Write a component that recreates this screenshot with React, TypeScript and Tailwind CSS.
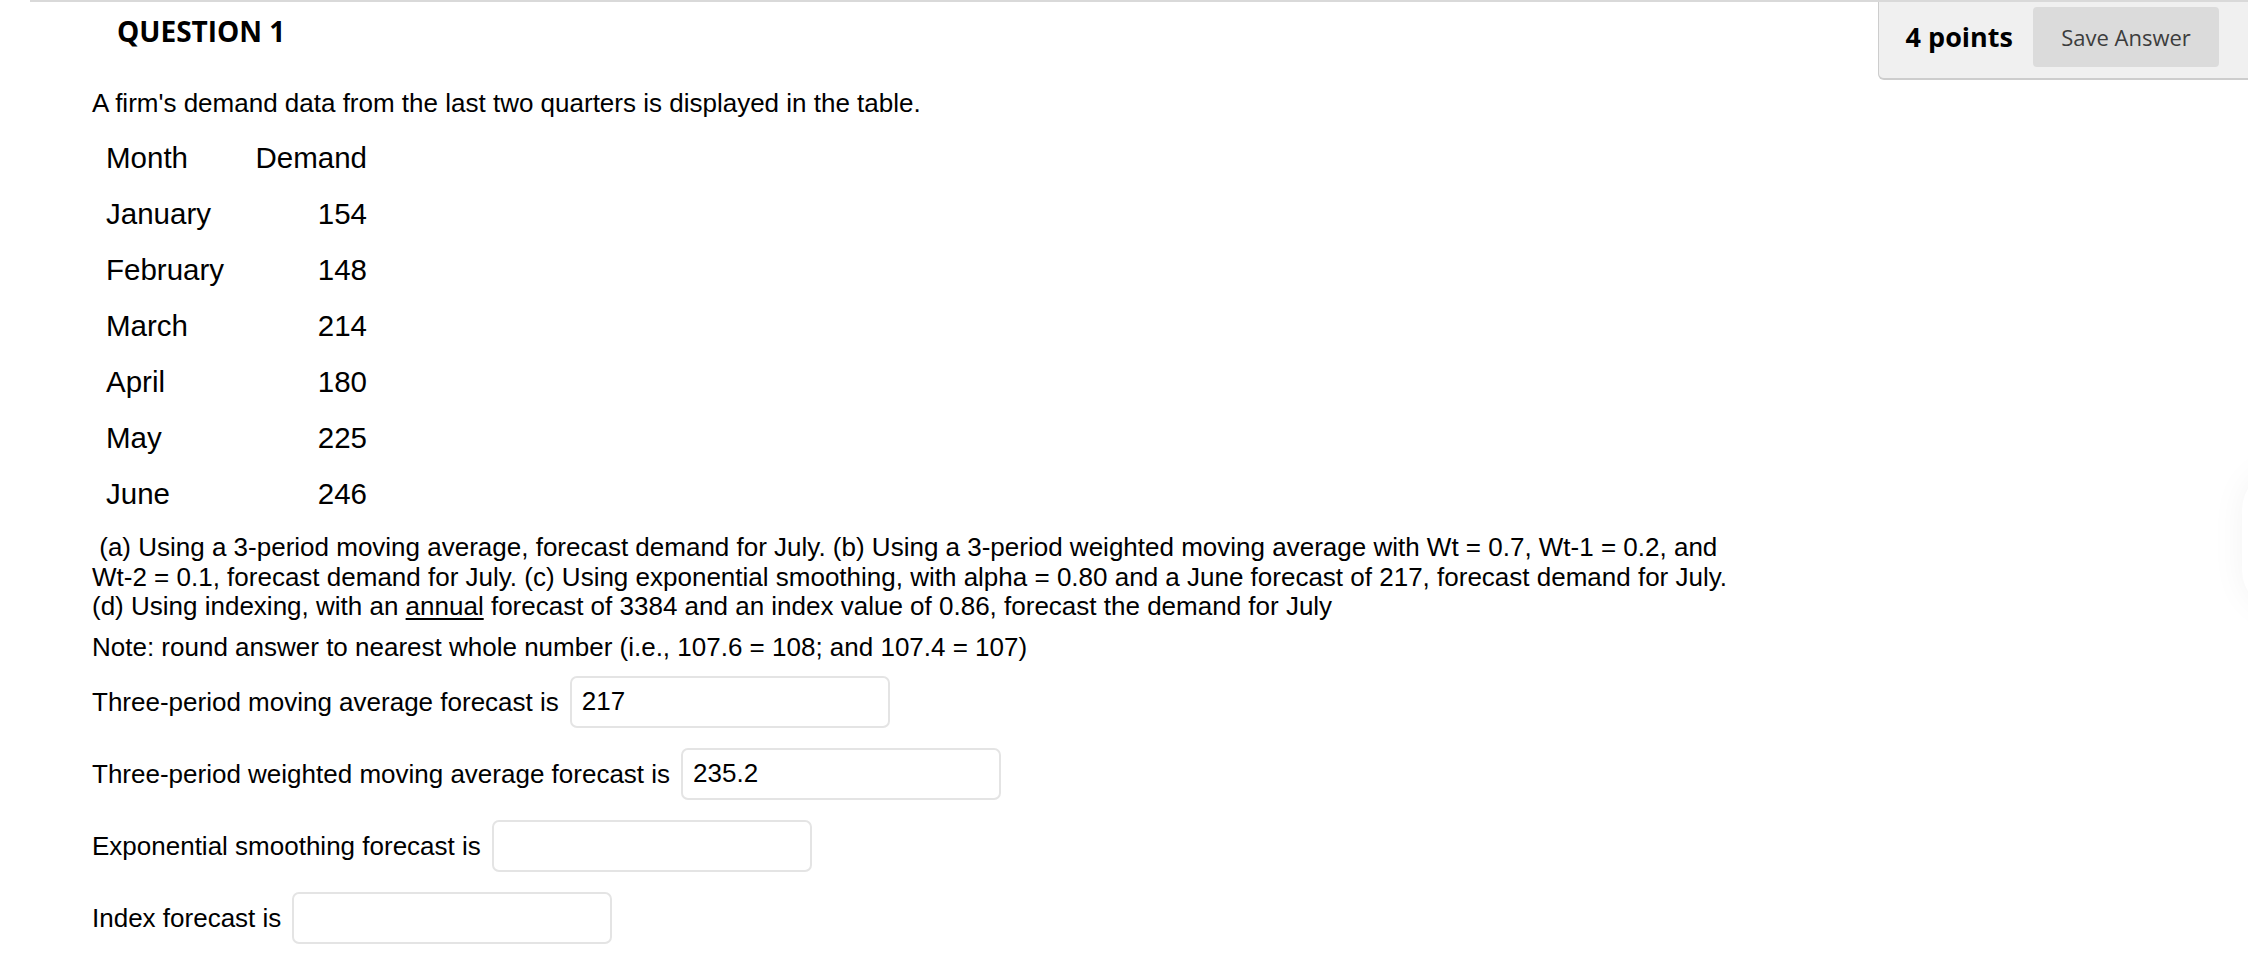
const months = [
  { name: 'January', demand: 154 },
  { name: 'February', demand: 148 },
  { name: 'March', demand: 214 },
  { name: 'April', demand: 180 },
  { name: 'May', demand: 225 },
  { name: 'June', demand: 246 },
];

const answers = [
  { label: 'Three-period moving average forecast is', value: '217' },
  { label: 'Three-period weighted moving average forecast is', value: '235.2' },
  { label: 'Exponential smoothing forecast is', value: '' },
  { label: 'Index forecast is', value: '' },
];

export default function App() {
  return (
    <div className="relative min-h-screen overflow-hidden bg-white font-['Liberation_Sans',Arial,sans-serif] text-black">
      {/* faint shadow of a floating tab at the right edge */}
      <div className="absolute right-[-74px] top-[470px] h-[140px] w-[80px] rounded-full shadow-[0_0_34px_rgba(0,0,0,0.05)]" />

      <div className="ml-[30px] border-t-2 border-[#d9d9d9]">
        <div className="flex items-start justify-between">
          <h2 className="pl-[87px] pt-[9px] font-['Open_Sans',sans-serif] text-[28px] font-bold leading-[40px]">
            QUESTION 1
          </h2>
          <div className="flex items-center gap-[20px] rounded-bl-[6px] border-b-2 border-l border-[#cdcdcd] bg-[#f0f0f0] pb-[11px] pl-[27px] pr-[29px] pt-[5px] font-['Open_Sans',sans-serif]">
            <span className="text-[27px] font-bold">4 points</span>
            <button className="h-[60px] w-[186px] rounded-[4px] bg-[#dbdbdb] text-[22px] text-[#3d3d3d]">
              Save Answer
            </button>
          </div>
        </div>

        <div className="pl-[62px]">
          <p className="mt-[8px] text-[26px] leading-[30px]">
            A firm's demand data from the last two quarters is displayed in the table.
          </p>

          <div className="mt-[12px] grid grid-cols-[163px_112px] text-[29.5px]">
            <div className="flex h-[56px] items-center pl-[14px]">Month</div>
            <div className="flex h-[56px] items-center justify-end">Demand</div>
            {months.map((m) => (
              <div key={m.name} className="contents">
                <div className="flex h-[56px] items-center pl-[14px]">{m.name}</div>
                <div className="flex h-[56px] items-center justify-end">{m.demand}</div>
              </div>
            ))}
          </div>

          <p className="mt-[11px] text-[26px] leading-[29.5px]">
            &nbsp;(a) Using a 3-period moving average, forecast demand for July. (b) Using a 3-period weighted moving average with Wt = 0.7, Wt-1 = 0.2, and
            <br />
            Wt-2 = 0.1, forecast demand for July. (c) Using exponential smoothing, with alpha = 0.80 and a June forecast of 217, forecast demand for July.
            <br />
            (d) Using indexing, with an <span className="underline underline-offset-[3px]">annual</span> forecast of 3384 and an index value of 0.86, forecast the demand for July
          </p>

          <p className="mt-[10px] text-[26px] leading-[30px]">
            Note: round answer to nearest whole number (i.e., 107.6 = 108; and 107.4 = 107)
          </p>

          <div className="mt-[14px] flex flex-col gap-[20px]">
            {answers.map((a) => (
              <div key={a.label} className="flex items-center gap-[11px]">
                <span className="text-[26px] leading-[30px]">{a.label}</span>
                <input
                  type="text"
                  defaultValue={a.value}
                  className="h-[52px] w-[320px] rounded-[7px] border-2 border-[#e4e4e4] bg-white px-[10px] text-[26px] text-black outline-none"
                />
              </div>
            ))}
          </div>
        </div>
      </div>
    </div>
  );
}
